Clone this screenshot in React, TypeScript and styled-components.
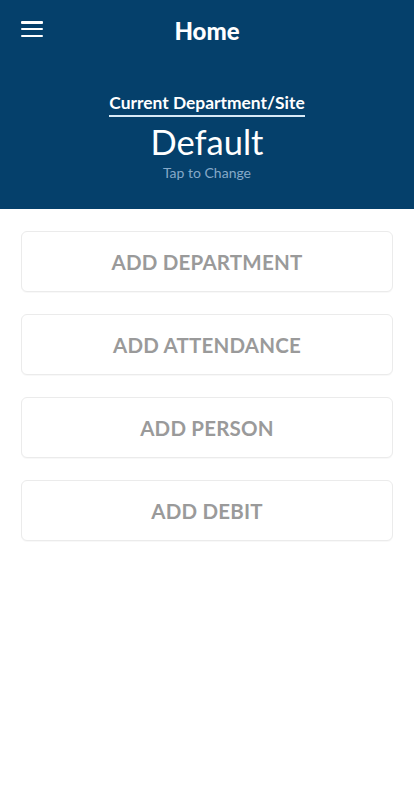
import { createGlobalStyle } from 'styled-components';
import styled from 'styled-components';

const GlobalStyle = createGlobalStyle`
  html, body {
    margin: 0;
    padding: 0;
    background: #ffffff;
  }
  body {
    font-family: Lato, "Open Sans", sans-serif;
  }
`;

const Page = styled.div`
  width: 414px;
  min-height: 800px;
  background: #ffffff;
`;

const Header = styled.header`
  background: #05406b;
  height: 209px;
  display: flex;
  flex-direction: column;
  align-items: center;
`;

const TopBar = styled.div`
  position: relative;
  width: 100%;
  height: 64px;
  display: flex;
  align-items: flex-start;
  justify-content: center;
`;

const MenuButton = styled.button`
  position: absolute;
  left: 21px;
  top: 21px;
  width: 22px;
  height: 16px;
  padding: 0;
  border: none;
  background: transparent;
  display: flex;
  flex-direction: column;
  justify-content: space-between;
  span {
    display: block;
    height: 2.5px;
    background: #ffffff;
    border-radius: 1px;
  }
`;

const Title = styled.h1`
  margin: 16px 0 0;
  color: #ffffff;
  font-size: 24px;
  font-weight: 900;
`;

const SiteBlock = styled.div`
  margin-top: 28px;
  display: flex;
  flex-direction: column;
  align-items: center;
  cursor: pointer;
`;

const SiteLabel = styled.div`
  color: #ffffff;
  font-size: 17.4px;
  font-weight: 700;
  line-height: 21px;
  padding-bottom: 2px;
  border-bottom: 2px solid #d8eaf7;
`;

const SiteName = styled.div`
  color: #ffffff;
  font-size: 34.5px;
  font-weight: 400;
  line-height: 40px;
  margin-top: 5px;
`;

const TapHint = styled.div`
  color: #86a9c8;
  font-size: 14px;
  line-height: 17px;
  margin-top: 2px;
`;

const Actions = styled.main`
  padding: 22px 21px;
  display: flex;
  flex-direction: column;
  gap: 22px;
`;

const ActionButton = styled.button`
  height: 61px;
  border: 1px solid #ebebeb;
  border-radius: 6px;
  background: #ffffff;
  color: #9a9a9a;
  font-family: Lato, "Open Sans", sans-serif;
  font-size: 20.5px;
  font-weight: 700;
  letter-spacing: 0.2px;
  box-shadow: 0 1px 1px rgba(0, 0, 0, 0.03);
`;

const actions = ['ADD DEPARTMENT', 'ADD ATTENDANCE', 'ADD PERSON', 'ADD DEBIT'];

export default function App() {
  return (
    <Page>
      <GlobalStyle />
      <Header>
        <TopBar>
          <MenuButton aria-label="menu">
            <span />
            <span />
            <span />
          </MenuButton>
          <Title>Home</Title>
        </TopBar>
        <SiteBlock>
          <SiteLabel>Current Department/Site</SiteLabel>
          <SiteName>Default</SiteName>
          <TapHint>Tap to Change</TapHint>
        </SiteBlock>
      </Header>
      <Actions>
        {actions.map((label) => (
          <ActionButton key={label}>{label}</ActionButton>
        ))}
      </Actions>
    </Page>
  );
}
